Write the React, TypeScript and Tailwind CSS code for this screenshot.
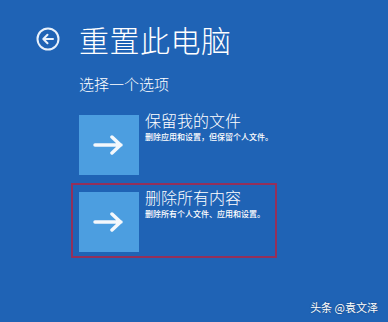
const font = { fontFamily: '"Noto Sans CJK SC", "Noto Sans", sans-serif' };

function BackIcon() {
  return (
    <svg width="24" height="24" viewBox="0 0 24 24" fill="none">
      <circle cx="12" cy="12" r="10.5" stroke="#e8f1fb" strokeWidth="2" />
      <path d="M17 12H7.5M11.5 7.8L7.3 12l4.2 4.2" stroke="#e8f1fb" strokeWidth="2" strokeLinecap="round" strokeLinejoin="round" />
    </svg>
  );
}

function ArrowTile() {
  return (
    <div className="flex h-[60px] w-[60px] shrink-0 items-center justify-center bg-[#4c9ee0]">
      <svg width="32" height="20" viewBox="0 0 32 20" fill="none">
        <path d="M2 10h26M19 2l8.5 8-8.5 8" stroke="#f4f8fc" strokeWidth="3.5" strokeLinecap="round" strokeLinejoin="round" />
      </svg>
    </div>
  );
}

function Option({ title, desc }: { title: string; desc: string }) {
  return (
    <div className="flex gap-[6px]">
      <ArrowTile />
      <div className="-mt-[3px] flex flex-col">
        <span className="text-[16px] leading-[16px] font-light text-white">{title}</span>
        <span className="mt-[4px] text-[8px] leading-[10px] font-medium text-white">{desc}</span>
      </div>
    </div>
  );
}

export default function App() {
  return (
    <div className="relative h-[322px] w-[388px] overflow-hidden bg-[#1f63b5] text-white" style={font}>
      <div className="flex items-center gap-[19px] pl-[36px] pt-[21px]">
        <BackIcon />
        <h1 className="text-[30px] leading-[36px] font-light tracking-[0.5px]">重置此电脑</h1>
      </div>
      <div className="pl-[79px]">
        <p className="mt-[17px] text-[15px] leading-[20px] font-light">选择一个选项</p>
        <div className="mt-[21px]">
          <Option title="保留我的文件" desc="删除应用和设置，但保留个人文件。" />
        </div>
      </div>
      <div className="ml-[71px] mt-[8px] w-[206px] border-2 border-[#93305a] pb-[4px] pl-[6px] pt-[7px]">
        <Option title="删除所有内容" desc="删除所有个人文件、应用和设置。" />
      </div>
      <span className="absolute bottom-[8px] right-[10px] text-[11px] leading-[14px] text-white [text-shadow:0_0_2px_rgba(0,0,0,0.4)]">
        头条 @袁文泽
      </span>
    </div>
  );
}
